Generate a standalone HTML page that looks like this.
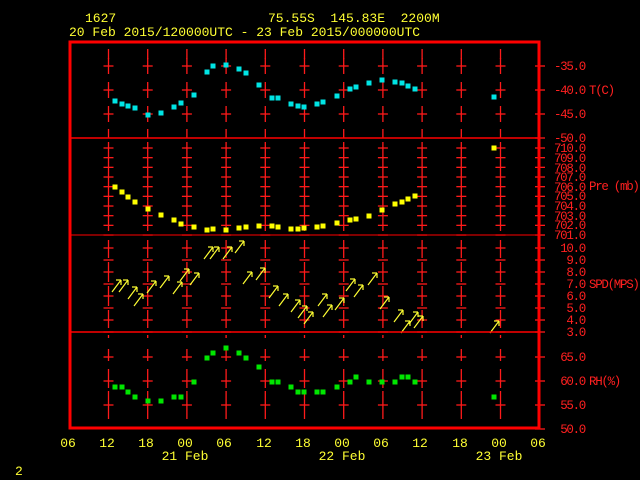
<!DOCTYPE html>
<html><head><meta charset="utf-8"><style>
html,body{margin:0;padding:0;background:#000;width:640px;height:480px;overflow:hidden}
svg{display:block}
text{font-family:"Liberation Mono",monospace;}
.y{fill:#ffff33;font-size:13px}
.r{fill:#ff2020;font-size:12.5px;letter-spacing:-1.3px}
</style></head><body>
<svg id="s" width="640" height="480" xmlns="http://www.w3.org/2000/svg">
<rect width="640" height="480" fill="#000"/>
<g id="g"></g>
<rect x="70" y="42" width="469" height="386" fill="none" stroke="#ff0000" stroke-width="3"/>
<line x1="70" y1="138" x2="539" y2="138" stroke="#ff0000" stroke-width="1.5"/>
<line x1="70" y1="235" x2="539" y2="235" stroke="#ff0000" stroke-width="1"/>
<line x1="70" y1="332" x2="539" y2="332" stroke="#ff0000" stroke-width="1.5"/>
<text class="y" x="85" y="22">1627</text>
<text class="y" x="268" y="22" xml:space="preserve">75.55S  145.83E  2200M</text>
<text class="y" x="69" y="36">20 Feb 2015/120000UTC - 23 Feb 2015/000000UTC</text>
<g class="r" text-anchor="end">
<text x="585" y="70">-35.0</text><text x="585" y="94">-40.0</text><text x="585" y="118">-45.0</text><text x="585" y="142">-50.0</text>
<text x="585" y="152">710.0</text><text x="585" y="162">709.0</text><text x="585" y="172">708.0</text><text x="585" y="181">707.0</text>
<text x="585" y="191">706.0</text><text x="585" y="200">705.0</text><text x="585" y="210">704.0</text><text x="585" y="220">703.0</text>
<text x="585" y="229">702.0</text><text x="585" y="239">701.0</text>
<text x="585" y="252">10.0</text><text x="585" y="264">9.0</text><text x="585" y="276">8.0</text><text x="585" y="288">7.0</text>
<text x="585" y="300">6.0</text><text x="585" y="312">5.0</text><text x="585" y="324">4.0</text><text x="585" y="336">3.0</text>
<text x="585" y="361">65.0</text><text x="585" y="385">60.0</text><text x="585" y="409">55.0</text><text x="585" y="433">50.0</text>
</g>
<g class="r"><text x="589" y="94">T(C)</text><text x="589" y="190">Pre (mb)</text><text x="589" y="288">SPD(MPS)</text><text x="589" y="385">RH(%)</text></g>
<g class="y" text-anchor="middle">
<text x="68" y="447">06</text><text x="107" y="447">12</text><text x="146" y="447">18</text><text x="185" y="447">00</text>
<text x="224" y="447">06</text><text x="264" y="447">12</text><text x="303" y="447">18</text><text x="342" y="447">00</text>
<text x="381" y="447">06</text><text x="420" y="447">12</text><text x="460" y="447">18</text><text x="499" y="447">00</text><text x="538" y="447">06</text>
<text x="185" y="460">21 Feb</text><text x="342" y="460">22 Feb</text><text x="499" y="460">23 Feb</text>
</g>
<text class="y" x="15" y="475">2</text>
</svg>
<script>
var g=document.getElementById('g'),h='';
var R='#ff1a1a';
function L(a,b,c,d,col,w){h+='<line x1="'+a+'" y1="'+b+'" x2="'+c+'" y2="'+d+'" stroke="'+(col||R)+'" stroke-width="'+(w||1.3)+'"/>';}
var cols=[];for(var k=0;k<11;k++)cols.push(108.5+39.2*k);
var tT=[66,90,114],tP=[],tS=[],tH=[357,381,405];
for(var i=0;i<10;i++)tP.push(148+9.67*i);
for(i=0;i<8;i++)tS.push(248+12*i);
cols.forEach(function(x){
 L(x,49,x,59);L(x,129,x,138);
 tT.forEach(function(y){L(x,y-8,x,y+8);L(x-5,y,x+5,y);});
 tP.concat(tS).forEach(function(y){L(x-5,y,x+5,y);});
 L(x,142,x,231);L(x,240,x,258);L(x,262,x,282);L(x,286,x,306);L(x,310,x,328);
 L(x,335,x,338);L(x,349,x,361);L(x,369,x,388);L(x,391,x,419);
 tH.forEach(function(y){L(x-5,y,x+5,y);});
});
tT.concat([138],tP,tS,tH,[429]).forEach(function(y){L(535,y,545,y);});
function P(arr,col){arr.forEach(function(p){h+='<rect x="'+(p[0]-2.5)+'" y="'+(p[1]-2.5)+'" width="5" height="5" fill="'+col+'"/>';});}
var xs=[115,122,128,135,148,161,174,181,194,207,213,226,239,246,259,272,278,291,298,304,317,323,337,350,356,369,382,395,402,408,415];
var T=[101,104,106,108,115,113,107,103,95,72,66,65,69,73,85,98,98,104,106,107,104,102,96,89,87,83,80,82,83,86,89];
var Pp=[187,192,197,202,209,215,220,224,227,230,229,230,228,227,226,226,227,229,229,228,227,226,223,220,219,216,210,204,202,199,196];
var H=[387,387,392,397,401,401,397,397,382,358,353,348,353,358,367,382,382,387,392,392,392,392,387,382,377,382,382,382,377,377,382];
P(xs.map(function(x,i){return[x,T[i]]}).concat([[494,97]]),'#00e5e5');
P(xs.map(function(x,i){return[x,Pp[i]]}).concat([[494,148]]),'#ffff00');
P(xs.map(function(x,i){return[x,H[i]]}).concat([[494,397]]),'#00e600');
var A=[[121,280],[128,280],[137,287],[143,294],[156,281],[169,276],[182,282],[189,269],[199,273],[213,247],[219,247],[232,247],[244,241],[252,272],[265,268],[278,286],[288,294],[300,300],[307,306],[313,312],[327,294],[332,305],[344,298],[355,279],[363,285],[377,273],[389,297],[403,310],[410,321],[418,312],[423,316],[499,321]];
A.forEach(function(a){var x=a[0],y=a[1],Y='#ffff33';L(x,y,x-9,y+12,Y,1.2);L(x-5,y,x,y,Y,1.2);L(x,y,x,y+5,Y,1.2);});
g.innerHTML=h;
</script>
</body></html>
